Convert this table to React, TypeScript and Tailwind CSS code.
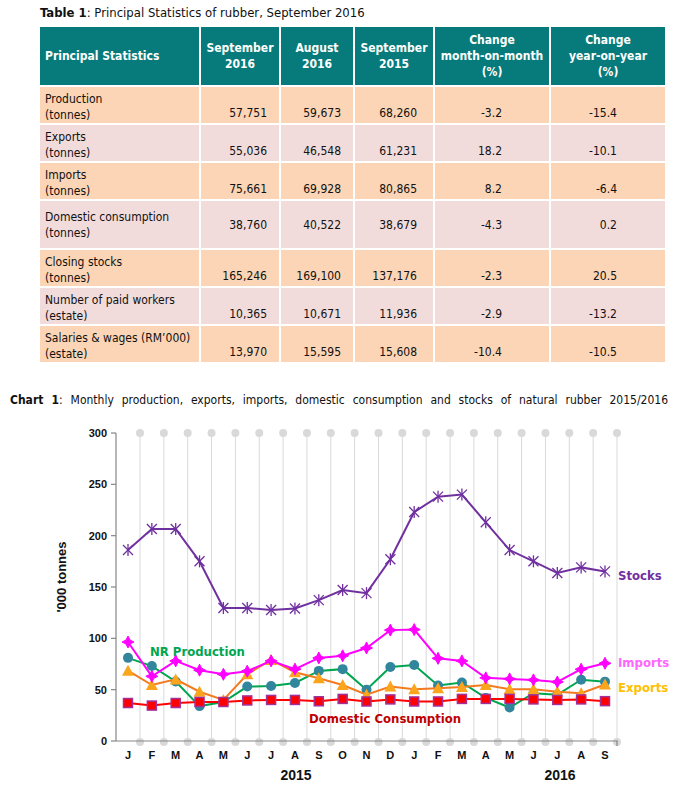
import React from "react";

type Row = {
  label: [string, string];
  values: string[];
  tone: "peach" | "pink";
  tall?: boolean;
};

const rows: Row[] = [
  { label: ["Production", "(tonnes)"], values: ["57,751", "59,673", "68,260", "-3.2", "-15.4"], tone: "peach" },
  { label: ["Exports", "(tonnes)"], values: ["55,036", "46,548", "61,231", "18.2", "-10.1"], tone: "pink" },
  { label: ["Imports", "(tonnes)"], values: ["75,661", "69,928", "80,865", "8.2", "-6.4"], tone: "peach" },
  { label: ["Domestic consumption", "(tonnes)"], values: ["38,760", "40,522", "38,679", "-4.3", "0.2"], tone: "pink", tall: true },
  { label: ["Closing stocks", "(tonnes)"], values: ["165,246", "169,100", "137,176", "-2.3", "20.5"], tone: "peach" },
  { label: ["Number of paid workers", "(estate)"], values: ["10,365", "10,671", "11,936", "-2.9", "-13.2"], tone: "pink" },
  { label: ["Salaries & wages (RM’000)", "(estate)"], values: ["13,970", "15,595", "15,608", "-10.4", "-10.5"], tone: "peach" },
];

// right padding for each numeric column
const numPad = ["pr-[12px]", "pr-[12px]", "pr-[16px]", "pr-[47px]", "pr-[48px]"];

const months = ["J", "F", "M", "A", "M", "J", "J", "A", "S", "O", "N", "D", "J", "F", "M", "A", "M", "J", "J", "A", "S"];

const stocks = [186, 206.5, 206.5, 175, 129.5, 129.5, 127.6, 129, 137.2, 147, 144, 177, 223, 238, 240, 213, 186, 175, 163.6, 169.1, 165.2];
const imports = [96.4, 63, 78, 69, 65, 68, 78, 70, 80.9, 83, 90.6, 108, 108.5, 80.5, 78, 61.5, 60.5, 59.5, 57.5, 69.9, 75.7];
const production = [81, 73, 58, 34, 38, 53, 53.5, 56.5, 68.3, 70, 50, 72, 74, 54, 57, 42, 32.6, 46.5, 45, 59.7, 57.8];
const exportsData = [68.5, 54.5, 60, 48, 40, 65, 79, 67, 61.2, 54.5, 45, 53, 50.5, 51.5, 52.5, 54.5, 50.5, 50.5, 48, 46.5, 55];
const domestic = [37, 34.5, 37, 38, 38, 39.5, 40, 40, 38.7, 41, 38.5, 40.5, 38.5, 38.5, 41, 41, 41, 40.5, 40, 40.5, 38.8];

const px = (i: number) => 128 + i * 23.85;
const py = (v: number) => 742 - (v * 308) / 300;
const pts = (d: number[]) => d.map((v, i) => `${px(i)},${py(v)}`).join(" ");

const LABEL_FONT = "DejaVu Sans Condensed, DejaVu Sans, sans-serif";
const AXIS_FONT = "Liberation Sans, Arial, sans-serif";

function Header() {
  const cell = "bg-[#077b7b] text-white font-bold h-[58px] flex items-center justify-center text-center";
  return (
    <>
      <div className="bg-[#077b7b] text-white font-bold h-[58px] flex items-center pl-[5px]">Principal Statistics</div>
      <div className={cell}>September<br />2016</div>
      <div className={cell}>August<br />2016</div>
      <div className={cell}>September<br />2015</div>
      <div className={cell}>Change<br />month-on-month<br />(%)</div>
      <div className={cell}>Change<br />year-on-year<br />(%)</div>
    </>
  );
}

function StatRow({ row }: { row: Row }) {
  const bg = row.tone === "peach" ? "bg-[#fbd5b5]" : "bg-[#f2dcdb]";
  const h = row.tall ? "h-[47px]" : "h-[36px]";
  return (
    <>
      <div className={`${bg} ${h} pl-[5px] flex flex-col ${row.tall ? "justify-center" : "pt-[4px]"}`}>
        <span>{row.label[0]}</span>
        <span>{row.label[1]}</span>
      </div>
      {row.values.map((v, i) => (
        <div
          key={i}
          className={`${bg} ${h} ${numPad[i]} flex justify-end ${row.tall ? "items-center" : "items-end pb-[2px]"}`}
        >
          {v}
        </div>
      ))}
    </>
  );
}

function StarMark({ x, y }: { x: number; y: number }) {
  return (
    <g stroke="#7030a0" strokeWidth={1.3}>
      <line x1={x - 5} y1={y - 5} x2={x + 5} y2={y + 5} />
      <line x1={x - 5} y1={y + 5} x2={x + 5} y2={y - 5} />
      <line x1={x} y1={y - 6} x2={x} y2={y + 6} />
    </g>
  );
}

function Sparkle({ x, y }: { x: number; y: number }) {
  const d = `M${x},${y - 6} L${x + 2},${y - 2} L${x + 6},${y} L${x + 2},${y + 2} L${x},${y + 6} L${x - 2},${y + 2} L${x - 6},${y} L${x - 2},${y - 2} Z`;
  return <path d={d} fill="#ff00ff" stroke="#ff00ff" strokeWidth={1} />;
}

function Chart() {
  const grid = Array.from({ length: 21 }, (_, k) => 140 + k * 23.85);
  const ticks = [0, 50, 100, 150, 200, 250, 300];
  return (
    <svg width={678} height={376} viewBox="0 420 678 376" className="block">
      {grid.map((x, k) => (
        <g key={k}>
          <line x1={x} y1={434} x2={x} y2={742} stroke="#d9d9d9" strokeWidth={1} />
          <circle cx={x} cy={434} r={4} fill="#d9d9d9" />
          <circle cx={x} cy={743} r={4} fill="#d9d9d9" />
        </g>
      ))}

      <line x1={116} y1={434} x2={116} y2={742} stroke="#868686" strokeWidth={1.2} />
      <line x1={116} y1={742} x2={618} y2={742} stroke="#868686" strokeWidth={1.2} />
      <line x1={617} y1={742} x2={617} y2={747} stroke="#868686" strokeWidth={1.2} />
      {ticks.map((t) => (
        <g key={t}>
          <line x1={111} y1={py(t)} x2={116} y2={py(t)} stroke="#868686" strokeWidth={1.2} />
          <text x={107} y={py(t) + 4} textAnchor="end" fontFamily={AXIS_FONT} fontWeight="bold" fontSize={11} fill="#111">
            {t}
          </text>
        </g>
      ))}

      <text
        transform="translate(66,578) rotate(-90)"
        textAnchor="middle"
        fontFamily={AXIS_FONT}
        fontWeight="bold"
        fontSize={13}
        fill="#111"
      >
        '000 tonnes
      </text>

      {months.map((m, i) => (
        <text key={i} x={px(i)} y={760} textAnchor="middle" fontFamily={AXIS_FONT} fontWeight="bold" fontSize={11} fill="#111">
          {m}
        </text>
      ))}
      <text x={296} y={781} textAnchor="middle" fontFamily={AXIS_FONT} fontWeight="bold" fontSize={14} fill="#111">2015</text>
      <text x={560} y={781} textAnchor="middle" fontFamily={AXIS_FONT} fontWeight="bold" fontSize={14} fill="#111">2016</text>

      {/* stocks */}
      <polyline points={pts(stocks)} fill="none" stroke="#7030a0" strokeWidth={2} />
      {stocks.map((v, i) => <StarMark key={i} x={px(i)} y={py(v)} />)}

      {/* NR production */}
      <polyline points={pts(production)} fill="none" stroke="#00a550" strokeWidth={2} />
      {production.map((v, i) => <circle key={i} cx={px(i)} cy={py(v)} r={5} fill="#31859c" />)}

      {/* exports */}
      <polyline points={pts(exportsData)} fill="none" stroke="#f47a20" strokeWidth={2} />
      {exportsData.map((v, i) => {
        const x = px(i), y = py(v);
        return <polygon key={i} points={`${x},${y - 6} ${x + 6},${y + 5} ${x - 6},${y + 5}`} fill="#fba51d" />;
      })}

      {/* imports */}
      <polyline points={pts(imports)} fill="none" stroke="#ff00ff" strokeWidth={2} />
      {imports.map((v, i) => <Sparkle key={i} x={px(i)} y={py(v)} />)}

      {/* domestic consumption */}
      <polyline points={pts(domestic)} fill="none" stroke="#ff0000" strokeWidth={2} />
      {domestic.map((v, i) => (
        <rect key={i} x={px(i) - 4.5} y={py(v) - 4.5} width={9} height={9} fill="#ff0000" stroke="#a0309a" strokeWidth={1.5} />
      ))}

      <text x={618} y={581} fontFamily={LABEL_FONT} fontWeight="bold" fontSize={13} fill="#7030a0">Stocks</text>
      <text x={618} y={668} fontFamily={LABEL_FONT} fontWeight="bold" fontSize={13} fill="#ff66ff">Imports</text>
      <text x={618} y={693} fontFamily={LABEL_FONT} fontWeight="bold" fontSize={13} fill="#ffc000">Exports</text>
      <text x={150} y={657} fontFamily={LABEL_FONT} fontWeight="bold" fontSize={13} fill="#00a550">NR Production</text>
      <text x={309} y={724} fontFamily={LABEL_FONT} fontWeight="bold" fontSize={13} fill="#c00000">Domestic Consumption</text>
    </svg>
  );
}

export default function App() {
  return (
    <div className="w-[678px] h-[796px] bg-white overflow-hidden text-[12px] leading-[16px] text-[#111] font-['DejaVu_Sans_Condensed','DejaVu_Sans',sans-serif]">
      <p className="h-[27px] pt-[4px] pl-[40px] text-[13px] leading-[18px]">
        <b>Table 1</b>: Principal Statistics of rubber, September 2016
      </p>

      <div className="ml-[40px] w-[625px] grid grid-cols-[159px_78px_72px_78px_114px_114px] gap-[2px]">
        <Header />
        {rows.map((r, i) => (
          <StatRow key={i} row={r} />
        ))}
      </div>

      <p className="mt-[30px] px-[10px] h-[16px] text-justify [text-align-last:justify]">
        <b>Chart 1</b>: Monthly production, exports, imports, domestic consumption and stocks of natural rubber 2015/2016
      </p>

      <div className="mt-[11px]">
        <Chart />
      </div>
    </div>
  );
}
